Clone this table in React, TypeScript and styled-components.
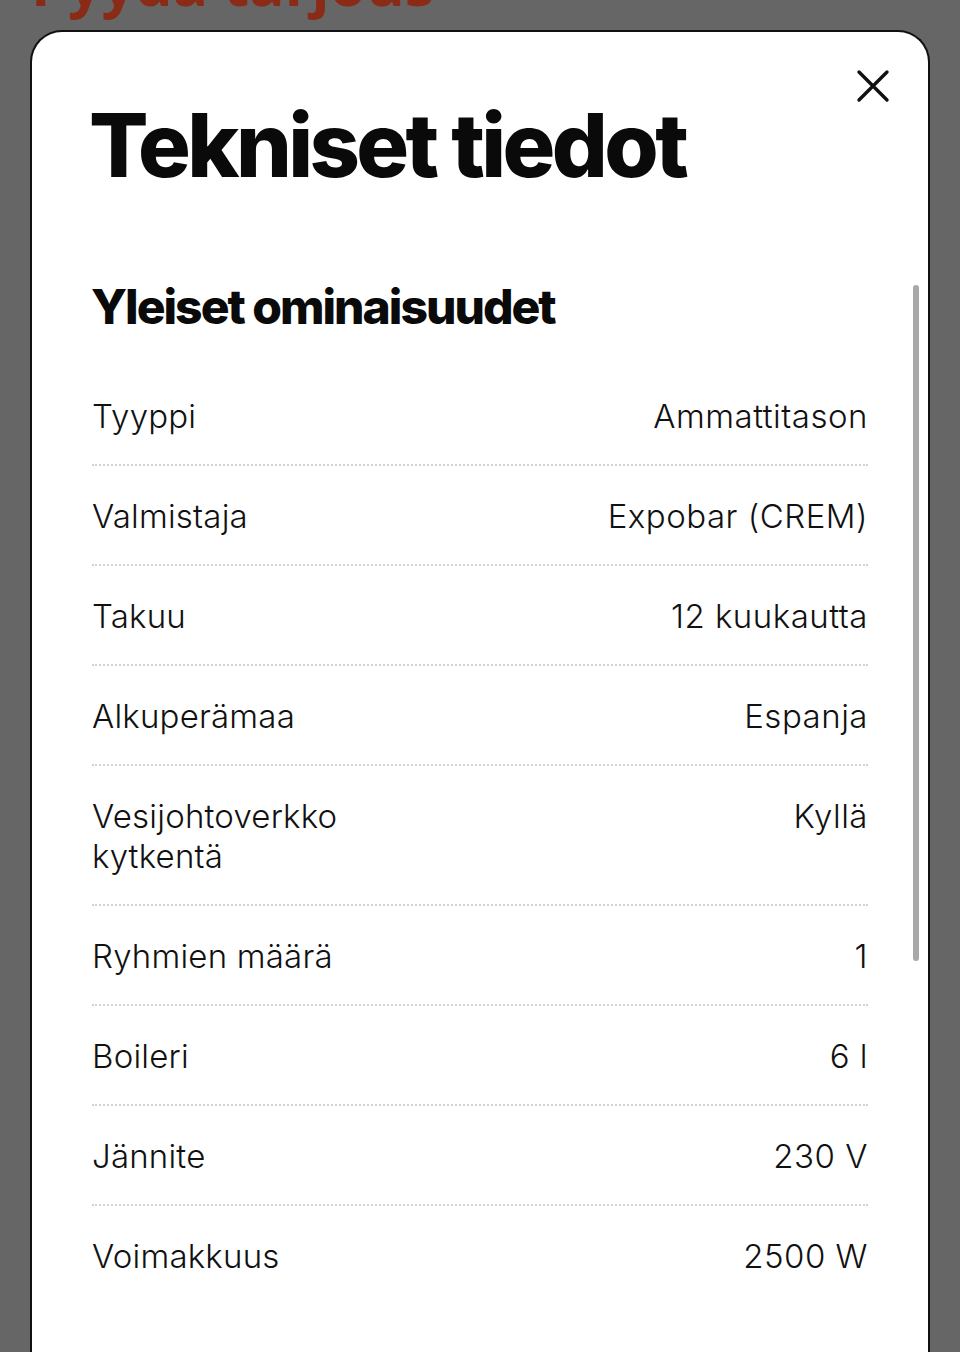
import React from "react";
import styled, { createGlobalStyle } from "styled-components";

const GlobalStyle = createGlobalStyle`
  html, body {
    margin: 0;
    padding: 0;
    background: #666666;
  }
  body {
    font-family: Inter, "Noto Sans", sans-serif;
    overflow: hidden;
  }
`;

const Backdrop = styled.div`
  height: 1352px;
  overflow: hidden;
  background: #666666;
`;

const PageHeading = styled.div`
  margin: -47px 0 0 31px;
  height: 77px;
  font-family: "Open Sans", "Noto Sans", sans-serif;
  font-weight: 700;
  font-size: 59px;
  line-height: 60px;
  color: #8a2b18;
  white-space: nowrap;
`;

const Modal = styled.section`
  position: relative;
  margin: 0 30px;
  min-height: 1400px;
  box-sizing: border-box;
  background: #ffffff;
  border: 2px solid #111111;
  border-bottom: none;
  border-radius: 32px 32px 0 0;
  padding: 69px 60px 0 60px;
`;

const CloseButton = styled.button`
  position: absolute;
  top: 37px;
  right: 38px;
  width: 34px;
  height: 34px;
  padding: 0;
  border: none;
  background: transparent;
  display: flex;
  align-items: center;
  justify-content: center;
  cursor: pointer;
`;

const Title = styled.h1`
  margin: 0 0 0 -3px;
  font-family: Inter, sans-serif;
  font-weight: 800;
  font-size: 88px;
  line-height: 88px;
  letter-spacing: -3.6px;
  color: #0a0a0a;
`;

const SectionTitle = styled.h2`
  margin: 94px 0 0 -1px;
  font-family: Inter, sans-serif;
  font-weight: 800;
  font-size: 48px;
  line-height: 48px;
  letter-spacing: -2px;
  color: #0a0a0a;
`;

const SpecList = styled.dl`
  margin: 35px 0 0 0;
  padding: 0;
`;

const SpecRow = styled.div`
  display: grid;
  grid-template-columns: 1fr auto;
  column-gap: 24px;
  padding: 30px 0 28px 0;
  border-bottom: 2px dotted #d2d2d2;

  &:last-child {
    border-bottom: none;
  }
`;

const SpecLabel = styled.dt`
  margin: 0;
  font-family: Inter, sans-serif;
  font-weight: 300;
  font-size: 33px;
  line-height: 40px;
  letter-spacing: 0.2px;
  color: #111111;
  max-width: 300px;
`;

const SpecValue = styled.dd`
  margin: 0;
  font-family: Inter, sans-serif;
  font-weight: 300;
  font-size: 33px;
  line-height: 40px;
  letter-spacing: 0.5px;
  color: #111111;
  text-align: right;
`;

const ScrollThumb = styled.div`
  position: absolute;
  top: 253px;
  right: 9px;
  width: 6px;
  height: 676px;
  border-radius: 3px;
  background: #a8a8a8;
`;

const specs: { label: string; value: string }[] = [
  { label: "Tyyppi", value: "Ammattitason" },
  { label: "Valmistaja", value: "Expobar (CREM)" },
  { label: "Takuu", value: "12 kuukautta" },
  { label: "Alkuperämaa", value: "Espanja" },
  { label: "Vesijohtoverkko kytkentä", value: "Kyllä" },
  { label: "Ryhmien määrä", value: "1" },
  { label: "Boileri", value: "6 l" },
  { label: "Jännite", value: "230 V" },
  { label: "Voimakkuus", value: "2500 W" },
];

export default function App() {
  return (
    <>
      <GlobalStyle />
      <Backdrop>
        <PageHeading>Pyydä tarjous</PageHeading>
        <Modal>
          <CloseButton aria-label="Sulje">
            <svg width="34" height="34" viewBox="0 0 34 34" fill="none">
              <path
                d="M3 3 L31 31 M31 3 L3 31"
                stroke="#111111"
                strokeWidth="3.4"
                strokeLinecap="round"
              />
            </svg>
          </CloseButton>
          <Title>Tekniset tiedot</Title>
          <SectionTitle>Yleiset ominaisuudet</SectionTitle>
          <SpecList>
            {specs.map((s) => (
              <SpecRow key={s.label}>
                <SpecLabel>{s.label}</SpecLabel>
                <SpecValue>{s.value}</SpecValue>
              </SpecRow>
            ))}
          </SpecList>
          <ScrollThumb />
        </Modal>
      </Backdrop>
    </>
  );
}
